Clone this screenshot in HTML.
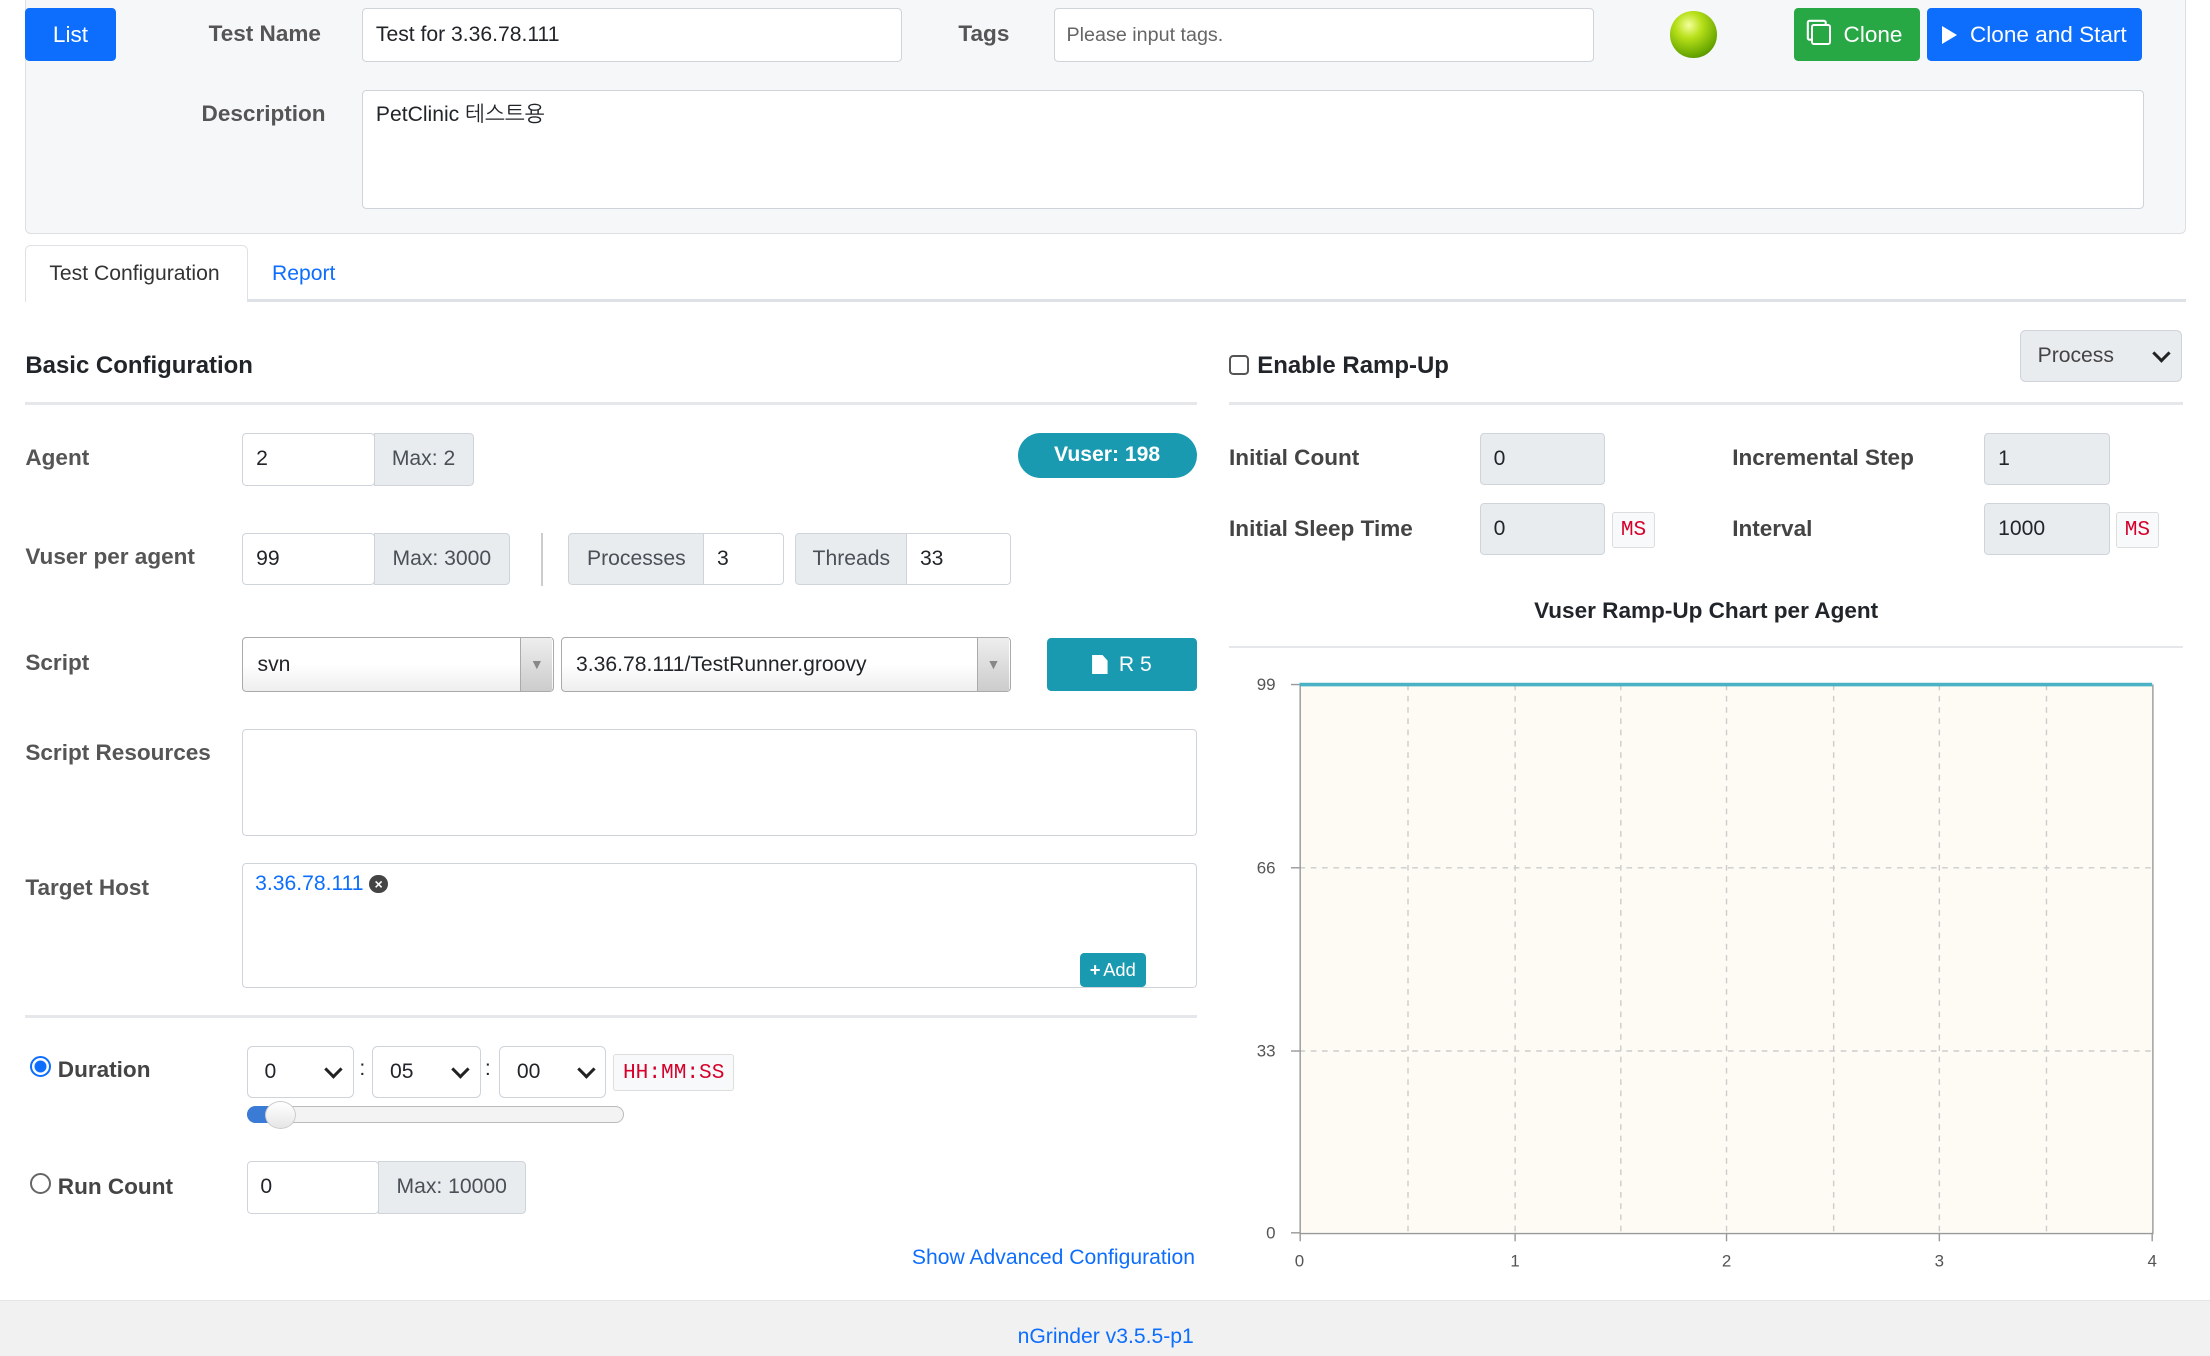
<!DOCTYPE html>
<html><head><meta charset="utf-8"><style>
html{zoom:1.40944}
body{margin:0;width:1568px;height:955px;position:relative;overflow:hidden;background:#fff;font-family:"Liberation Sans","NanumGothic",sans-serif;font-size:15px;color:#212529}
.a{position:absolute;box-sizing:border-box}
.lbl{position:absolute;font-weight:bold;color:#555;font-size:16px}
.inp{position:absolute;box-sizing:border-box;border:1px solid #ced4da;border-radius:3px;background:#fff;padding-left:9px;display:flex;align-items:center;font-size:15px}
.add{position:absolute;box-sizing:border-box;border:1px solid #ced4da;background:#e9ecef;display:flex;align-items:center;justify-content:center;font-size:15px;color:#495057}
.btn{position:absolute;box-sizing:border-box;color:#fff;display:flex;align-items:center;justify-content:center;border-radius:3px;font-size:16px}
.hr{position:absolute;height:2px;background:#e5e7ea}
.sel{position:absolute;box-sizing:border-box;border:1px solid #ced4da;border-radius:4px;background:#fff;padding-left:12px;display:flex;align-items:center;font-size:15px}
.sel:after{content:"";position:absolute;right:9px;top:50%;width:7px;height:7px;border-right:2.5px solid #222;border-bottom:2.5px solid #222;transform:translateY(-70%) rotate(45deg)}
.ms{position:absolute;box-sizing:border-box;border:1px solid #ddd;border-radius:2px;background:#f8f9fa;color:#d6002b;font-family:"Liberation Mono",monospace;font-size:15px;display:flex;align-items:center;justify-content:center}
</style></head><body>
<div class="a" style="left:18px;top:-2px;width:1533px;height:168px;background:#f6f7f9;border:1px solid #dcdfe3;border-radius:0 0 4px 4px"></div>
<div class="btn" style="left:18px;top:6px;width:64px;height:37px;background:#0d6efd;font-size:16px">List</div>
<div class="lbl" style="left:148px;top:15px">Test Name</div>
<div class="inp" style="left:257px;top:6px;width:383px;height:38px">Test for 3.36.78.111</div>
<div class="lbl" style="left:680px;top:15px">Tags</div>
<div class="inp" style="left:748px;top:6px;width:383px;height:38px;color:#666;font-size:14px;padding-left:8px">Please input tags.</div>
<div class="a" style="left:1185px;top:8px;width:33px;height:33px;border-radius:50%;background:radial-gradient(circle at 40% 30%,#f4ff9a 0,#b8e01a 30%,#6aa800 70%,#3d6b00 100%)"></div>
<div class="btn" style="left:1273px;top:6px;width:89px;height:37px;background:#28a745"><span style="display:inline-block;width:11px;height:12px;border:1.5px solid #fff;border-radius:2px;margin-right:9px;box-shadow:-3px -3px 0 -1.5px #28a745,-3px -3px 0 0 #fff"></span>Clone</div>
<div class="btn" style="left:1367px;top:6px;width:153px;height:37px;background:#0d6efd"><span style="width:0;height:0;border-left:11px solid #fff;border-top:7px solid transparent;border-bottom:7px solid transparent;margin-right:9px"></span>Clone and Start</div>
<div class="lbl" style="left:143px;top:72px">Description</div>
<div class="inp" style="left:257px;top:64px;width:1264px;height:84px;align-items:flex-start;padding-top:8px">PetClinic 테스트용</div>

<div class="a" style="left:18px;top:212px;width:1533px;height:2px;background:#dee2e6"></div>
<div class="a" style="left:18px;top:174px;width:158px;height:40px;background:#fff;border:1px solid #dee2e6;border-bottom:none;border-radius:4px 4px 0 0"></div>
<div class="a" style="left:35px;top:186px;font-size:15px;color:#333">Test Configuration</div>
<div class="a" style="left:193px;top:186px;font-size:15px;color:#0d6efd">Report</div>

<div class="a" style="left:18px;top:250px;font-size:17px;font-weight:bold">Basic Configuration</div>
<div class="hr" style="left:18px;top:285px;width:831px"></div>
<div class="a" style="left:872px;top:252px;width:14px;height:14px;border:1.5px solid #555;border-radius:3px"></div>
<div class="a" style="left:892px;top:250px;font-size:17px;font-weight:bold">Enable Ramp-Up</div>
<div class="sel" style="left:1433px;top:234px;width:115px;height:37px;background:#e9ecef;color:#444">Process</div>
<div class="hr" style="left:872px;top:285px;width:677px"></div>

<div class="lbl" style="left:18px;top:316px">Agent</div>
<div class="inp" style="left:172px;top:307px;width:94px;height:38px">2</div>
<div class="add" style="left:265px;top:307px;width:71px;height:38px;border-radius:0 3px 3px 0">Max: 2</div>
<div class="btn" style="left:722px;top:307px;width:127px;height:32px;background:#1a9ab0;border-radius:16px;font-weight:bold;font-size:15px">Vuser: 198</div>

<div class="lbl" style="left:18px;top:386px">Vuser per agent</div>
<div class="inp" style="left:172px;top:378px;width:94px;height:37px">99</div>
<div class="add" style="left:265px;top:378px;width:97px;height:37px;border-radius:0 3px 3px 0">Max: 3000</div>
<div class="a" style="left:384px;top:378px;width:1px;height:38px;background:#ccc"></div>
<div class="add" style="left:403px;top:378px;width:97px;height:37px;border-radius:3px 0 0 3px">Processes</div>
<div class="inp" style="left:499px;top:378px;width:57px;height:37px;border-radius:0 3px 3px 0">3</div>
<div class="add" style="left:564px;top:378px;width:80px;height:37px;border-radius:3px 0 0 3px">Threads</div>
<div class="inp" style="left:643px;top:378px;width:74px;height:37px;border-radius:0 3px 3px 0">33</div>

<div class="lbl" style="left:18px;top:461px">Script</div>
<div class="inp" style="left:172px;top:452px;width:221px;height:39px;border-color:#aaa;background:linear-gradient(#fff 50%,#eee);padding-left:10px">svn</div>
<div class="a" style="left:369px;top:453px;width:23px;height:37px;border-left:1px solid #aaa;background:linear-gradient(#eee,#ccc);color:#888;font-size:10px;text-align:center;line-height:37px">▼</div>
<div class="inp" style="left:398px;top:452px;width:319px;height:39px;border-color:#aaa;background:linear-gradient(#fff 50%,#eee);padding-left:10px">3.36.78.111/TestRunner.groovy</div>
<div class="a" style="left:693px;top:453px;width:23px;height:37px;border-left:1px solid #aaa;background:linear-gradient(#eee,#ccc);color:#888;font-size:10px;text-align:center;line-height:37px">▼</div>
<div class="btn" style="left:743px;top:453px;width:106px;height:37px;background:#1a9ab0;font-size:15px"><span style="display:inline-block;width:11px;height:14px;background:#fff;margin-right:8px;clip-path:polygon(0 0,65% 0,100% 30%,100% 100%,0 100%)"></span>R 5</div>

<div class="lbl" style="left:18px;top:525px">Script Resources</div>
<div class="inp" style="left:172px;top:517px;width:677px;height:76px"></div>

<div class="lbl" style="left:18px;top:621px">Target Host</div>
<div class="inp" style="left:172px;top:612px;width:677px;height:89px"></div>
<div class="a" style="left:181px;top:619px;color:#0d6efd;font-size:15px">3.36.78.111 <span style="display:inline-block;width:13px;height:13px;border-radius:50%;background:#444;color:#fff;font-size:10px;line-height:13px;text-align:center;vertical-align:1px;font-weight:bold">×</span></div>
<div class="btn" style="left:766px;top:676px;width:47px;height:24px;background:#1a9ab0;font-size:13px"><b style="margin-right:2px">+</b>Add</div>

<div class="hr" style="left:18px;top:720px;width:831px"></div>
<div class="a" style="left:21px;top:749px;width:15px;height:15px;border-radius:50%;border:1.5px solid #0d6efd;background:radial-gradient(circle,#0d6efd 0 4px,#fff 4.5px)"></div>
<div class="lbl" style="left:41px;top:750px;color:#444">Duration</div>
<div class="sel" style="left:175px;top:742px;width:76px;height:37px">0</div>
<div class="a" style="left:255px;top:750px">:</div>
<div class="sel" style="left:264px;top:742px;width:77px;height:37px">05</div>
<div class="a" style="left:344px;top:750px">:</div>
<div class="sel" style="left:354px;top:742px;width:76px;height:37px">00</div>
<div class="ms" style="left:435px;top:748px;width:86px;height:26px">HH:MM:SS</div>
<div class="a" style="left:175px;top:785px;width:268px;height:12px;border:1px solid #bbb;border-radius:6px;background:#f3f3f3"></div>
<div class="a" style="left:175px;top:785px;width:25px;height:12px;border-radius:6px 0 0 6px;background:#3a7bd5"></div>
<div class="a" style="left:188px;top:781px;width:22px;height:20px;border-radius:50%;border:1px solid #ccc;background:linear-gradient(#fff,#e6e6e6)"></div>

<div class="a" style="left:21px;top:832px;width:15px;height:15px;border-radius:50%;border:1.5px solid #666;background:#fff"></div>
<div class="lbl" style="left:41px;top:833px;color:#444">Run Count</div>
<div class="inp" style="left:175px;top:824px;width:94px;height:37px">0</div>
<div class="add" style="left:268px;top:824px;width:105px;height:37px;border-radius:0 3px 3px 0">Max: 10000</div>
<div class="a" style="left:647px;top:884px;color:#0d6efd;font-size:15px">Show Advanced Configuration</div>

<div class="lbl" style="left:872px;top:316px;color:#444">Initial Count</div>
<div class="inp" style="left:1050px;top:307px;width:89px;height:37px;background:#e9ecef">0</div>
<div class="lbl" style="left:1229px;top:316px;color:#444">Incremental Step</div>
<div class="inp" style="left:1408px;top:307px;width:89px;height:37px;background:#e9ecef">1</div>
<div class="lbl" style="left:872px;top:366px;color:#444">Initial Sleep Time</div>
<div class="inp" style="left:1050px;top:357px;width:89px;height:37px;background:#e9ecef">0</div>
<div class="ms" style="left:1144px;top:363px;width:30px;height:26px">MS</div>
<div class="lbl" style="left:1229px;top:366px;color:#444">Interval</div>
<div class="inp" style="left:1408px;top:357px;width:89px;height:37px;background:#e9ecef">1000</div>
<div class="ms" style="left:1501px;top:363px;width:31px;height:26px">MS</div>

<div class="a" style="left:872px;top:424px;width:677px;text-align:center;font-weight:bold;font-size:16px">Vuser Ramp-Up Chart per Agent</div>
<div class="hr" style="left:872px;top:458px;width:677px"></div>
<svg class="a" style="left:872px;top:470px" width="680" height="440">
<rect x="50" y="16" width="605" height="389" fill="#fdfbf3"/>
<g stroke="#ccc" stroke-dasharray="4,4" stroke-width="1">
<line x1="127" y1="16" x2="127" y2="405"/><line x1="203" y1="16" x2="203" y2="405"/><line x1="278" y1="16" x2="278" y2="405"/><line x1="353" y1="16" x2="353" y2="405"/><line x1="429" y1="16" x2="429" y2="405"/><line x1="504" y1="16" x2="504" y2="405"/><line x1="580" y1="16" x2="580" y2="405"/>
<line x1="50" y1="146" x2="655" y2="146"/><line x1="50" y1="276" x2="655" y2="276"/>
</g>
<g stroke="#999" stroke-width="1"><line x1="50.5" y1="16" x2="50.5" y2="406"/><line x1="50" y1="405.5" x2="655" y2="405.5"/><line x1="655.5" y1="16" x2="655.5" y2="406"/>
<line x1="44" y1="16" x2="50" y2="16"/><line x1="44" y1="146" x2="50" y2="146"/><line x1="44" y1="276" x2="50" y2="276"/><line x1="44" y1="405" x2="50" y2="405"/>
<line x1="50.5" y1="405" x2="50.5" y2="411"/><line x1="203" y1="405" x2="203" y2="411"/><line x1="353" y1="405" x2="353" y2="411"/><line x1="504" y1="405" x2="504" y2="411"/><line x1="655" y1="405" x2="655" y2="411"/></g>
<line x1="50" y1="16" x2="655" y2="16" stroke="#4bb2c5" stroke-width="2.5"/>
<g font-family="Liberation Sans" font-size="12" fill="#555">
<text x="33" y="20" text-anchor="end">99</text><text x="33" y="150" text-anchor="end">66</text><text x="33" y="280" text-anchor="end">33</text><text x="33" y="409" text-anchor="end">0</text>
<text x="50" y="429" text-anchor="middle">0</text><text x="203" y="429" text-anchor="middle">1</text><text x="353" y="429" text-anchor="middle">2</text><text x="504" y="429" text-anchor="middle">3</text><text x="655" y="429" text-anchor="middle">4</text>
</g></svg>

<div class="a" style="left:0;top:922px;width:1568px;height:40px;background:#f1f1f1;border-top:1px solid #e5e5e5"></div>
<div class="a" style="left:722px;top:940px;color:#0d6efd;font-size:15px">nGrinder v3.5.5-p1</div>
</body></html>
